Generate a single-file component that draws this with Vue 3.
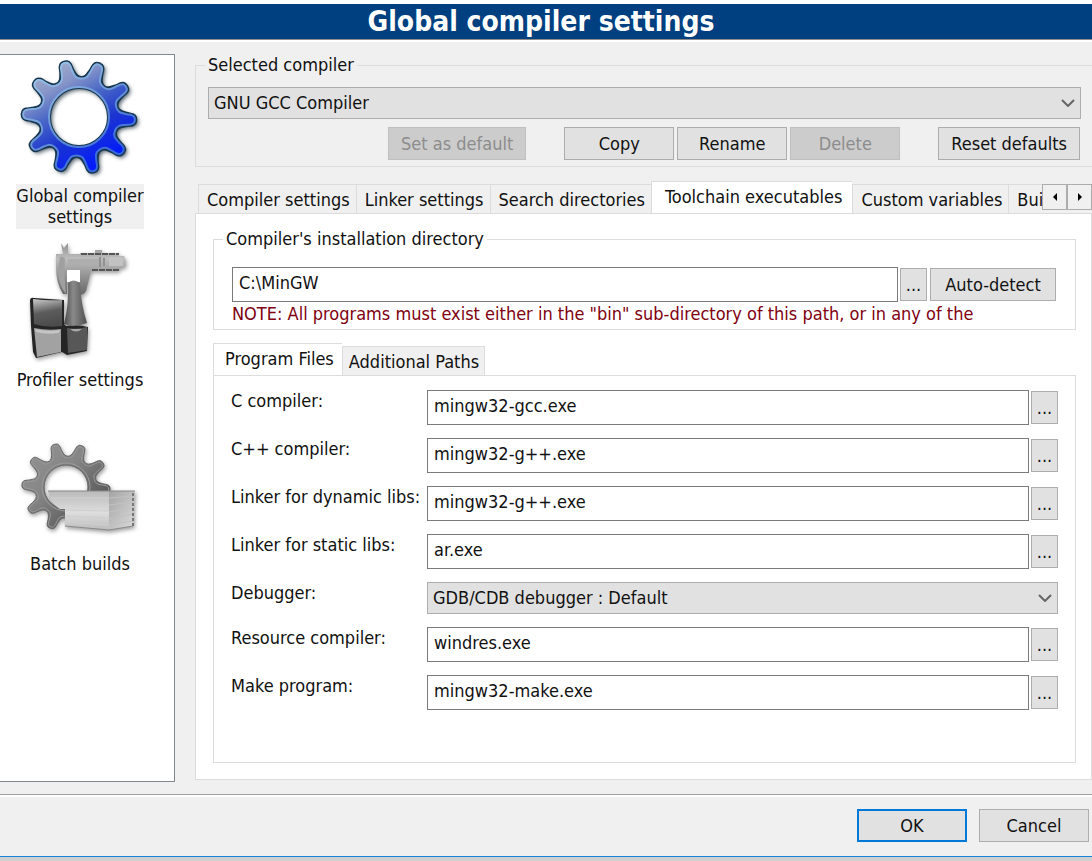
<script setup>
import { ref } from 'vue'

const categories = [
  { id: 'global', label: 'Global compiler settings' },
  { id: 'profiler', label: 'Profiler settings' },
  { id: 'batch', label: 'Batch builds' },
]
const category = ref('global')

const tabs = [
  'Compiler settings',
  'Linker settings',
  'Search directories',
  'Toolchain executables',
  'Custom variables',
  'Build options',
]
const tab = ref('Toolchain executables')

const innerTabs = ['Program Files', 'Additional Paths']
const innerTab = ref('Program Files')

const compiler = ref('GNU GCC Compiler')
const installDir = ref('C:\\MinGW')

const programs = ref([
  { id: 'cc', label: 'C compiler:', value: 'mingw32-gcc.exe' },
  { id: 'cpp', label: 'C++ compiler:', value: 'mingw32-g++.exe' },
  { id: 'dyn', label: 'Linker for dynamic libs:', value: 'mingw32-g++.exe' },
  { id: 'lib', label: 'Linker for static libs:', value: 'ar.exe' },
  { id: 'dbg', label: 'Debugger:', value: 'GDB/CDB debugger : Default', select: true },
  { id: 'res', label: 'Resource compiler:', value: 'windres.exe' },
  { id: 'make', label: 'Make program:', value: 'mingw32-make.exe' },
])

// Smooth closed outline of a ten-toothed gear with a round hole.
// Profile points are [degrees from tooth centre, radius + inset].
function gear(cx, cy, scale, hole, inset = 0) {
  const k = inset / 40
  const profile = [
    [-18, 40], [-12, 42], [-8, 48], [-6, 54], [-3, 57],
    [3, 57], [6, 54], [8, 48], [12, 42],
  ]
  const pts = []
  for (let i = 0; i < 10; i++) {
    for (const [a, r] of profile) {
      const t = ((i * 36 + 3 + (Math.abs(a) === 18 ? a : a * (1 - 4 * k))) * Math.PI) / 180
      pts.push([cx + (r - inset) * scale * Math.cos(t), cy + (r - inset) * scale * Math.sin(t)])
    }
  }
  const n = pts.length
  const f = (v) => v.toFixed(2)
  let d = `M${f(pts[0][0])} ${f(pts[0][1])}`
  for (let i = 0; i < n; i++) {
    const p0 = pts[(i + n - 1) % n]
    const p1 = pts[i]
    const p2 = pts[(i + 1) % n]
    const p3 = pts[(i + 2) % n]
    d += `C${f(p1[0] + (p2[0] - p0[0]) / 6)} ${f(p1[1] + (p2[1] - p0[1]) / 6)} `
    d += `${f(p2[0] - (p3[0] - p1[0]) / 6)} ${f(p2[1] - (p3[1] - p1[1]) / 6)} ${f(p2[0])} ${f(p2[1])}`
  }
  return `${d}ZM${cx - hole} ${cy}a${hole} ${hole} 0 1 0 ${hole * 2} 0a${hole} ${hole} 0 1 0 ${-hole * 2} 0Z`
}
const blueGear = gear(63, 61, 1, 29)
const blueRim = gear(63, 61, 1, 30, 1.5)
const greyGear = gear(50, 63, 0.77, 22)
const greyRim = gear(50, 63, 0.77, 24, 2)
</script>

<template>
  <div class="dialog">
    <h1 class="title">Global compiler settings</h1>

    <div class="body">
      <nav class="sidebar" aria-label="Categories">
        <button
          v-for="c in categories"
          :key="c.id"
          type="button"
          class="category"
          :class="{ active: category === c.id }"
          @click="category = c.id"
        >
          <svg v-if="c.id === 'global'" class="pic" viewBox="0 0 128 128" aria-hidden="true">
            <defs>
              <linearGradient id="blue" x1="0.2" y1="0.05" x2="0.7" y2="0.95">
                <stop offset="0" stop-color="#a3aecb" />
                <stop offset="0.2" stop-color="#8795c8" />
                <stop offset="0.4" stop-color="#4a68c6" />
                <stop offset="0.65" stop-color="#1c35cf" />
                <stop offset="1" stop-color="#0018ff" />
              </linearGradient>
              <linearGradient id="rim" x1="0.1" y1="0" x2="0.8" y2="1">
                <stop offset="0" stop-color="#a5cdea" />
                <stop offset="0.5" stop-color="#6894d6" />
                <stop offset="1" stop-color="#285cd8" />
              </linearGradient>
            </defs>
            <path class="shadow" :d="blueGear" fill-rule="evenodd" fill="#4c5a66" />
            <path :d="blueGear" fill-rule="evenodd" fill="url(#blue)" stroke="#17364f" stroke-width="2" />
            <path :d="blueRim" fill-rule="evenodd" fill="none" stroke="url(#rim)" stroke-width="2" />
          </svg>

          <svg v-else-if="c.id === 'profiler'" class="pic" viewBox="0 0 128 128" aria-hidden="true">
            <defs>
              <linearGradient id="cubeA" x1="0.2" y1="0" x2="0.4" y2="1">
                <stop offset="0" stop-color="#c4c4c4" />
                <stop offset="0.5" stop-color="#5c5c5c" />
                <stop offset="1" stop-color="#4c4c4c" />
              </linearGradient>
              <linearGradient id="cone" x1="0" y1="0" x2="1" y2="0">
                <stop offset="0" stop-color="#4a4a4a" />
                <stop offset="0.4" stop-color="#8a8a8a" />
                <stop offset="1" stop-color="#4e4e4e" />
              </linearGradient>
              <linearGradient id="steel" x1="0" y1="0" x2="0" y2="1">
                <stop offset="0" stop-color="#8f8f8f" />
                <stop offset="0.3" stop-color="#bdbdbd" />
                <stop offset="1" stop-color="#666" />
              </linearGradient>
            </defs>
            <g class="soft">
              <path d="M14 61Q14 57 18 58L48 60V84L50 86Q62 84 72 87L71 111L51 115L46 112L20 118L17 112L15 86Z" fill="#252525" />
              <path d="M17 59Q32 61 46 60V86Q30 88 18 84Z" fill="url(#cubeA)" />
              <path d="M18 88Q32 91 45 89V112L21 117Z" fill="#a2a2a2" />
              <path d="M19 89Q32 92 44 90L43 93Q30 95 20 92Z" fill="#c4c4c4" />
              <path d="M51 88Q61 90 71 87L71 110L52 113Z" fill="#575757" />
              <path d="M54 89Q60 94 66 89Z" fill="#a8a8a8" />
              <path
                d="M45 3L48 8L52 3V14H64V13H79V10H86V13H103V16H108Q111 22 109 27L103 28V31H75L70 51Q68 55 63 55L64 43L62 30H51V54H47Q40 43 40 28V14H47Z"
                fill="url(#steel)"
              />
              <path d="M52 19H83V25H52Z" fill="#aeaeae" />
              <path d="M93 17H107V26H93Z" fill="#c2c2c2" />
              <path d="M65 14H103M76 30H103" stroke="#555" stroke-width="2" stroke-dasharray="6 1" />
              <path d="M84 17V27M88 18V26" stroke="#919191" stroke-width="2" />
              <path d="M44 17Q48 16 49 19L48 31L50 54Q42 44 42 28Z" fill="#a0a0a0" />
              <path d="M51 30H64V42H51Z" fill="#fff" />
              <path d="M52 43Q57 38 64 43Q65 65 71 83Q58 88 48 84Q53 64 52 43Z" fill="url(#cone)" />
            </g>
          </svg>

          <svg v-else class="pic" viewBox="0 0 128 128" aria-hidden="true">
            <defs>
              <linearGradient id="grey" x1="0" y1="0" x2="1" y2="1">
                <stop offset="0" stop-color="#969696" />
                <stop offset="0.4" stop-color="#858585" />
                <stop offset="1" stop-color="#404040" />
              </linearGradient>
              <linearGradient id="front" x1="0" y1="0" x2="0" y2="1">
                <stop offset="0" stop-color="#bababa" />
                <stop offset="0.55" stop-color="#dedede" />
                <stop offset="1" stop-color="#bdbdbd" />
              </linearGradient>
              <linearGradient id="side" x1="0" y1="0" x2="1" y2="1">
                <stop offset="0" stop-color="#a4a4a4" />
                <stop offset="1" stop-color="#dcdcdc" />
              </linearGradient>
              <clipPath id="behind">
                <path d="M0 0H128V67H50V128H0Z" />
              </clipPath>
            </defs>
            <g class="soft">
              <g clip-path="url(#behind)">
                <path :d="greyGear" fill-rule="evenodd" fill="url(#grey)" stroke="#656565" stroke-width="1" />
                <path :d="greyRim" fill-rule="evenodd" fill="none" stroke="#9a9a9a" stroke-width="1" />
              </g>
              <path d="M32 67H93V106L49 102V85H44Q34 79 32 67Z" fill="url(#front)" />
              <path d="M93 67H119L117 102L93 106Z" fill="url(#side)" />
              <path d="M35 74H93M39 80H93M50 86L93 87M50 92L93 94M50 98L93 101" stroke="#cfcfcf" fill="none" />
              <path d="M93 74L117 72M93 81L117 78M93 88L117 84M93 95L117 90M93 101L117 97" stroke="#c2c2c2" fill="none" />
              <path d="M32 67H119M49 102L93 106L117 102" stroke="#8a8a8a" fill="none" />
              <path d="M117 69V102" stroke="#777" stroke-width="2" stroke-dasharray="3 2" />
            </g>
          </svg>
          <span class="category-label">{{ c.label }}</span>
        </button>
      </nav>

      <main class="main">
        <fieldset class="group compiler-group">
          <legend>Selected compiler</legend>
          <div class="select-wrap">
            <select v-model="compiler" aria-label="Selected compiler">
              <option>GNU GCC Compiler</option>
            </select>
            <svg class="chevron" viewBox="0 0 14 8" aria-hidden="true"><path d="M1 1L7 7L13 1" /></svg>
          </div>
          <div class="actions">
            <button type="button" class="btn wide" disabled>Set as default</button>
            <div class="trio">
              <button type="button" class="btn">Copy</button>
              <button type="button" class="btn">Rename</button>
              <button type="button" class="btn" disabled>Delete</button>
            </div>
            <button type="button" class="btn wide">Reset defaults</button>
          </div>
        </fieldset>

        <section class="notebook">
          <div class="tabbar">
            <div class="tabs outer" role="tablist">
              <button
                v-for="t in tabs"
                :key="t"
                type="button"
                role="tab"
                class="tab"
                :class="{ active: tab === t }"
                :aria-selected="tab === t"
                @click="tab = t"
              >{{ t }}</button>
            </div>
            <div class="scroller">
              <button type="button" aria-label="Scroll tabs left">
                <svg viewBox="0 0 6 8" aria-hidden="true"><path d="M5 0V8L1 4Z" /></svg>
              </button>
              <button type="button" aria-label="Scroll tabs right">
                <svg viewBox="0 0 6 8" aria-hidden="true"><path d="M1 0V8L5 4Z" /></svg>
              </button>
            </div>
          </div>

          <div class="page" role="tabpanel">
            <fieldset class="group dir-group">
              <legend>Compiler's installation directory</legend>
              <div class="field">
                <input v-model="installDir" type="text" aria-label="Compiler's installation directory" />
                <button type="button" class="btn dots" aria-label="Browse">...</button>
                <button type="button" class="btn detect">Auto-detect</button>
              </div>
              <p class="note">NOTE: All programs must exist either in the "bin" sub-directory of this path, or in any of the</p>
            </fieldset>

            <div class="inner">
              <div class="tabs" role="tablist">
                <button
                  v-for="t in innerTabs"
                  :key="t"
                  type="button"
                  role="tab"
                  class="tab"
                  :class="{ active: innerTab === t }"
                  :aria-selected="innerTab === t"
                  @click="innerTab = t"
                >{{ t }}</button>
              </div>
              <div class="programs" role="tabpanel">
                <div v-for="p in programs" :key="p.id" class="row">
                  <label :for="p.id">{{ p.label }}</label>
                  <div v-if="p.select" class="select-wrap">
                    <select :id="p.id" v-model="p.value">
                      <option>GDB/CDB debugger : Default</option>
                    </select>
                    <svg class="chevron" viewBox="0 0 14 8" aria-hidden="true"><path d="M1 1L7 7L13 1" /></svg>
                  </div>
                  <div v-else class="field">
                    <input :id="p.id" v-model="p.value" type="text" />
                    <button type="button" class="btn dots" :aria-label="'Browse ' + p.label">...</button>
                  </div>
                </div>
              </div>
            </div>
          </div>
        </section>
      </main>
    </div>

    <footer class="footer">
      <button type="button" class="btn ok">OK</button>
      <button type="button" class="btn">Cancel</button>
    </footer>
  </div>
</template>

<style>
body {
  background: #cfcfcf;
}
</style>

<style scoped>
.dialog,
.dialog * {
  box-sizing: border-box;
}
.dialog {
  display: flex;
  flex-direction: column;
  min-height: calc(100vh - 4px);
  overflow: hidden;
  background: #f0f0f0;
  border-top: 4px solid #fff;
  border-bottom: 1px solid #1883d7;
  color: #111;
  font-family: "DejaVu Sans Condensed", "DejaVu Sans", sans-serif;
  font-size: 18px;
  line-height: 22px;
}
button,
input,
select {
  margin: 0;
  font: inherit;
  color: inherit;
  border-radius: 0;
}
.title {
  margin: 0;
  height: 36px;
  padding-right: 10px;
  background: #004080;
  border-bottom: 1px solid #8c8c8c;
  box-shadow: 0 2px 0 #fff;
  color: #fff;
  font-size: 28px;
  line-height: 36px;
  text-align: center;
}
.body {
  display: flex;
  flex: 1;
  gap: 20px;
  padding: 14px 0 12px;
}
.sidebar {
  flex: none;
  width: 175px;
  padding: 1px 14px 0 0;
  background: #fff;
  border: 1px solid #828790;
  border-left: 0;
}
.category {
  display: flex;
  flex-direction: column;
  align-items: center;
  width: 100%;
  height: 184px;
  padding: 0;
  border: 0;
  background: none;
}
.pic {
  flex: none;
  width: 128px;
  height: 128px;
}
.shadow {
  transform: translate(2px, 2px);
  filter: blur(2px);
}
.soft {
  filter: drop-shadow(1px 2px 2px #0006);
}
.category-label {
  width: 128px;
  line-height: 21px;
  padding: 1px 0 2px;
}
.active .category-label {
  background: #f0f0f0;
}
.main {
  display: flex;
  flex: 1;
  flex-direction: column;
  min-width: 0;
  padding-bottom: 2px;
}
.group {
  min-width: 0;
  margin: 0;
  border: 1px solid #dcdcdc;
}
.group legend {
  padding: 0 3px;
}
.compiler-group {
  border-right: 0;
  padding: 11px 11px 6px 12px;
}
.compiler-group legend {
  margin-left: -3px;
}
.dir-group legend {
  margin-left: -9px;
}
.select-wrap {
  display: grid;
  align-items: center;
}
.select-wrap > * {
  grid-area: 1 / 1;
}
select {
  appearance: none;
  width: 100%;
  height: 32px;
  padding: 0 30px 0 5px;
  background: #e1e1e1;
  border: 1px solid #adadad;
}
.chevron {
  justify-self: end;
  width: 14px;
  height: 8px;
  margin-right: 6px;
  fill: none;
  stroke: #666;
  stroke-width: 2;
  pointer-events: none;
}
.actions {
  display: flex;
  justify-content: flex-end;
  gap: 38px;
  margin-top: 8px;
  padding-right: 1px;
}
.trio {
  display: flex;
  gap: 3px;
}
.btn {
  width: 110px;
  height: 33px;
  padding: 0;
  background: #e1e1e1;
  border: 1px solid #adadad;
}
.btn:disabled {
  background: #ccc;
  border-color: #bfbfbf;
  color: #8d8d8d;
}
.btn.wide {
  width: auto;
  padding: 0 12px;
}
.notebook {
  display: flex;
  flex: 1;
  flex-direction: column;
  margin-top: 14px;
}
.tabbar {
  display: flex;
  align-items: flex-start;
}
.tabs {
  display: flex;
  align-items: flex-end;
  height: 33px;
  margin-bottom: -1px;
}
.tabs.outer {
  flex: 1;
  min-width: 0;
  overflow: hidden;
  padding-left: 3px;
}
.tab {
  flex: none;
  height: 30px;
  padding: 2px 6px 0 8px;
  background: #f0f0f0;
  border: 1px solid #dcdcdc;
  border-right-width: 0;
  white-space: nowrap;
}
.tab:last-child {
  border-right-width: 1px;
}
.tab.active {
  height: 33px;
  padding: 0 10px 2px 13px;
  background: #fff;
  border-bottom-color: #fff;
}
.inner .tab {
  padding: 2px 5px 0 6px;
}
.inner .tab.active {
  padding: 0 8px 2px 11px;
}
.scroller {
  display: flex;
  flex: none;
  margin-top: 3px;
}
.scroller button {
  display: grid;
  place-items: center;
  width: 25px;
  height: 26px;
  padding: 0;
  background: #f0f0f0;
  border: 1px solid #adadad;
}
.scroller svg {
  width: 6px;
  height: 8px;
  fill: #000;
}
.page {
  display: flex;
  flex: 1;
  flex-direction: column;
  padding: 14px 15px 16px 17px;
  background: #fff;
  border: 1px solid #dcdcdc;
}
.dir-group {
  padding: 17px 19px 4px 18px;
}
.field {
  display: flex;
  align-items: center;
  gap: 2px;
}
.field input {
  flex: 1;
  min-width: 0;
  height: 35px;
  padding: 0 6px 4px;
  background: #fff;
  border: 1px solid #7a7a7a;
}
.btn.dots {
  width: 27px;
}
.btn.detect {
  width: 126px;
  margin-left: 1px;
}
.note {
  margin: 1px 0 0;
  color: #80000f;
  white-space: nowrap;
}
.inner {
  display: flex;
  flex: 1;
  flex-direction: column;
  margin-top: 13px;
}
.programs {
  display: flex;
  flex: 1;
  flex-direction: column;
  gap: 13px;
  padding: 14px 17px 16px 17px;
  border: 1px solid #dcdcdc;
}
.row {
  display: grid;
  grid-template-columns: 196px 1fr;
}
.row label {
  white-space: nowrap;
}
.footer {
  display: flex;
  justify-content: flex-end;
  gap: 12px;
  padding: 14px 3px;
  border-top: 1px solid #a0a0a0;
  box-shadow: inset 0 2px 0 #fff;
}
.btn.ok {
  border: 2px solid #0078d7;
}
</style>
